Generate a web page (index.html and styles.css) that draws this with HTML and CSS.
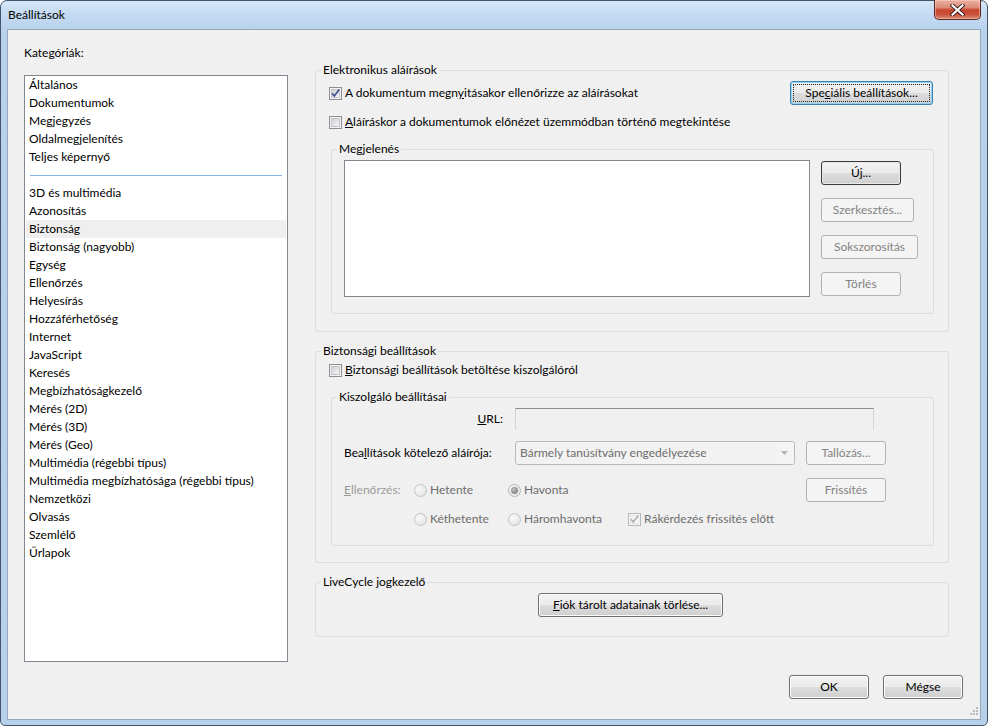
FILE: index.html
```html
<!DOCTYPE html>
<html lang="hu">
<head>
<meta charset="utf-8">
<title>Beállítások</title>
<link rel="stylesheet" href="styles.css">
</head>
<body>
<svg class="defs" width="0" height="0" aria-hidden="true">
  <defs>
    <linearGradient id="cbfill" x1="0" y1="0" x2="1" y2="1">
      <stop offset="0" stop-color="#cbcfd5"/>
      <stop offset="1" stop-color="#f6f6f6"/>
    </linearGradient>
    <linearGradient id="cbfilld" x1="0" y1="0" x2="1" y2="1">
      <stop offset="0" stop-color="#f0f0f0"/>
      <stop offset="1" stop-color="#fafafa"/>
    </linearGradient>
    <radialGradient id="rdfill" cx="0.35" cy="0.35" r="0.7">
      <stop offset="0" stop-color="#fafafa"/>
      <stop offset="1" stop-color="#e4e4e4"/>
    </radialGradient>
    <radialGradient id="rddot" cx="0.4" cy="0.35" r="0.7">
      <stop offset="0" stop-color="#c8c8c8"/>
      <stop offset="1" stop-color="#7a7a7a"/>
    </radialGradient>
    <symbol id="cb" viewBox="0 0 13 13">
      <rect x="0.5" y="0.5" width="12" height="12" fill="#f4f4f4" stroke="#8f8f8f"/>
      <rect x="2.5" y="2.5" width="8" height="8" fill="url(#cbfill)" stroke="#c2c6cc"/>
    </symbol>
    <symbol id="cbchk" viewBox="0 0 13 13">
      <rect x="0.5" y="0.5" width="12" height="12" fill="#f4f4f4" stroke="#8f8f8f"/>
      <rect x="2.5" y="2.5" width="8" height="8" fill="url(#cbfill)" stroke="#c2c6cc"/>
      <path d="M3 6.3 L5.3 9 L10.2 2.6" fill="none" stroke="#3d4f8c" stroke-width="1.7"/>
    </symbol>
    <symbol id="cbchkd" viewBox="0 0 13 13">
      <rect x="0.5" y="0.5" width="12" height="12" fill="#f4f4f4" stroke="#b8b8b8"/>
      <rect x="2.5" y="2.5" width="8" height="8" fill="url(#cbfilld)" stroke="#e2e2e2"/>
      <path d="M3 6.3 L5.3 9 L10.2 2.6" fill="none" stroke="#a8a8a8" stroke-width="1.5"/>
    </symbol>
    <symbol id="rd" viewBox="0 0 13 13">
      <circle cx="6.5" cy="6.5" r="6" fill="url(#rdfill)" stroke="#c4c4c4"/>
    </symbol>
    <symbol id="rdsel" viewBox="0 0 13 13">
      <circle cx="6.5" cy="6.5" r="6" fill="url(#rdfill)" stroke="#b5b5b5"/>
      <circle cx="6.5" cy="6.5" r="3.2" fill="url(#rddot)" stroke="#8c8c8c" stroke-width="0.6"/>
    </symbol>
  </defs>
</svg>

<div class="window">
  <div class="titlebar">
    <span class="title">Beállítások</span>
    <div class="close">
      <svg width="15" height="12" viewBox="0 0 15 12">
        <path d="M2.5 1.5 L12.5 10.5 M12.5 1.5 L2.5 10.5" stroke="#3a1c1c" stroke-width="4" stroke-linecap="square" fill="none"/>
        <path d="M2.5 1.5 L12.5 10.5 M12.5 1.5 L2.5 10.5" stroke="#ffffff" stroke-width="2.2" stroke-linecap="square" fill="none"/>
      </svg>
    </div>
  </div>

  <div class="client">
    <div class="main">
      <div class="left">
        <div class="cat-label">Kategóriák:</div>
        <ul class="catlist">
          <li>Általános</li>
          <li>Dokumentumok</li>
          <li>Megjegyzés</li>
          <li>Oldalmegjelenítés</li>
          <li>Teljes képernyő</li>
          <li class="sep"><span class="sepline"></span></li>
          <li>3D és multimédia</li>
          <li>Azonosítás</li>
          <li class="sel">Biztonság</li>
          <li>Biztonság (nagyobb)</li>
          <li>Egység</li>
          <li>Ellenőrzés</li>
          <li>Helyesírás</li>
          <li>Hozzáférhetőség</li>
          <li>Internet</li>
          <li>JavaScript</li>
          <li>Keresés</li>
          <li>Megbízhatóságkezelő</li>
          <li>Mérés (2D)</li>
          <li>Mérés (3D)</li>
          <li>Mérés (Geo)</li>
          <li>Multimédia (régebbi típus)</li>
          <li>Multimédia megbízhatósága (régebbi típus)</li>
          <li>Nemzetközi</li>
          <li>Olvasás</li>
          <li>Szemlélő</li>
          <li>Űrlapok</li>
        </ul>
      </div>

      <div class="right">
        <fieldset class="group">
          <legend>Elektronikus aláírások</legend>
          <div class="gbody g1">
            <div class="row1">
              <label class="chk"><svg class="box"><use href="#cbchk"/></svg><span>A dokumentum megn<u>y</u>itásakor ellenőrizze az aláírásokat</span></label>
              <button class="btn focus w143">Spe<u>c</u>iális beállítások...</button>
            </div>
            <div class="row2">
              <label class="chk"><svg class="box"><use href="#cb"/></svg><span><u>A</u>láíráskor a dokumentumok előnézet üzemmódban történő megtekintése</span></label>
            </div>
            <fieldset class="group inner">
              <legend>Megjelenés</legend>
              <div class="gbody gm">
                <div class="applist"></div>
                <div class="btncol">
                  <button class="btn def">Új...</button>
                  <button class="btn dis w93">Szerkesztés...</button>
                  <button class="btn dis w97">Sokszorosítás</button>
                  <button class="btn dis">Törlés</button>
                </div>
              </div>
            </fieldset>
          </div>
        </fieldset>

        <fieldset class="group">
          <legend>Biztonsági beállítások</legend>
          <div class="gbody g2">
            <div class="row2 first">
              <label class="chk"><svg class="box"><use href="#cb"/></svg><span><u>B</u>iztonsági beállítások betöltése kiszolgálóról</span></label>
            </div>
            <fieldset class="group inner">
              <legend>Kiszolgáló beállításai</legend>
              <div class="gbody gk">
                <div class="rowA">
                  <span class="lbl ralign"><u>U</u>RL:</span>
                  <div class="textbox"></div>
                </div>
                <div class="rowB">
                  <span class="lbl">Bea<u>l</u>lítások kötelező aláírója:</span>
                  <div class="combo">
                    <span>Bármely tanúsítvány engedélyezése</span>
                    <span class="arrowpart">
                      <svg width="7" height="4" viewBox="0 0 7 4"><path d="M0 0 H7 L3.5 4 Z" fill="#b4b4b4"/></svg>
                    </span>
                  </div>
                  <button class="btn dis">Tallózás...</button>
                </div>
                <div class="grid">
                  <span class="lbl faint"><u>E</u>llenőrzés:</span>
                  <label class="opt c2"><svg class="box"><use href="#rd"/></svg><span>Hetente</span></label>
                  <label class="opt c3"><svg class="box"><use href="#rdsel"/></svg><span>Havonta</span></label>
                  <button class="btn dis c5">Frissítés</button>
                  <label class="opt c2"><svg class="box"><use href="#rd"/></svg><span>Kéthetente</span></label>
                  <label class="opt c3"><svg class="box"><use href="#rd"/></svg><span>Háromhavonta</span></label>
                  <label class="opt c4"><svg class="box"><use href="#cbchkd"/></svg><span>Rákérdezés frissítés előtt</span></label>
                </div>
              </div>
            </fieldset>
          </div>
        </fieldset>

        <fieldset class="group">
          <legend>LiveCycle jogkezelő</legend>
          <div class="gbody g3">
            <button class="btn w185"><u>F</u>iók tárolt adatainak törlése...</button>
          </div>
        </fieldset>
      </div>
    </div>

    <div class="footer">
      <button class="btn">OK</button>
      <button class="btn">Mégse</button>
    </div>

    <svg class="grip" width="11" height="11" viewBox="0 0 11 11">
      <g fill="#b9bdc3">
        <rect x="8" y="0" width="2" height="2"/>
        <rect x="5" y="3" width="2" height="2"/><rect x="8" y="3" width="2" height="2"/>
        <rect x="2" y="6" width="2" height="2"/><rect x="5" y="6" width="2" height="2"/><rect x="8" y="6" width="2" height="2"/>
      </g>
    </svg>
  </div>
</div>
</body>
</html>
```

FILE: styles.css
```css
* { box-sizing: border-box; }

body {
  margin: 0;
  font-family: Lato, "Liberation Sans", sans-serif;
  font-size: 12px;
  line-height: 16px;
  color: #000;
  background: #fff;
}

.defs { position: absolute; width: 0; height: 0; }

.window {
  width: 988px;
  height: 726px;
  border: 1px solid #44556b;
  border-radius: 7px 7px 5px 5px;
  background: linear-gradient(180deg, #d6e7f8 0, #c3daf2 14px, #b9d2ec 28px, #b7d0ea 100%);
  display: flex;
  flex-direction: column;
  position: relative;
}

.titlebar {
  height: 28px;
  flex: none;
  display: flex;
  align-items: flex-start;
}

.title {
  padding-left: 7px;
  margin-top: 6px;
  line-height: 16px;
  color: #000;
}

.close {
  margin-left: auto;
  margin-right: 6px;
  margin-top: -1px;
  width: 47px;
  height: 20px;
  border: 1px solid #5b2622;
  border-top: none;
  border-radius: 0 0 5px 5px;
  background: linear-gradient(180deg, #ebb1a4 0, #dc8a76 40%, #c7462d 52%, #c9503a 75%, #dc8c72 100%);
  box-shadow: inset 0 0 0 1px rgba(255, 220, 210, 0.45);
  display: flex;
  align-items: center;
  justify-content: center;
}

.client {
  flex: 1;
  margin: 0 6px 5px;
  border: 1px solid #98a8bb;
  background: #f0f0f0;
  display: flex;
  flex-direction: column;
  position: relative;
}

.main {
  display: flex;
  padding: 15px 0 0 16px;
}

.left { width: 264px; flex: none; }

.cat-label { height: 16px; }

.catlist {
  list-style: none;
  margin: 14px 0 0;
  padding: 0 1px;
  height: 587px;
  border: 1px solid #828790;
  background: #fff;
}

.catlist li {
  height: 18px;
  line-height: 18px;
  padding-left: 3px;
  white-space: nowrap;
}

.catlist li.sel { background: #efefef; }

.catlist li.sep {
  display: flex;
  align-items: center;
  padding: 0 4px;
}

.sepline {
  display: block;
  width: 100%;
  height: 1px;
  background: #86b3e3;
}

.right {
  margin-left: 27px;
  width: 634px;
  flex: none;
  padding-top: 17px;
  display: flex;
  flex-direction: column;
  gap: 11px;
}

fieldset.group {
  margin: 0;
  padding: 0;
  min-width: 0;
  border: 1px solid #d5dfe5;
  border-radius: 3px;
}

fieldset.group > legend {
  margin-left: 5px;
  padding: 0 2px;
  line-height: 16px;
}

.g1 { padding: 3px 15px 17px 13px; }

.row1 {
  height: 24px;
  display: flex;
  align-items: center;
  justify-content: space-between;
}

.row2 {
  height: 16px;
  margin-top: 9px;
  display: flex;
  align-items: center;
}

.row2.first { margin-top: 0; }

.chk, .opt {
  display: flex;
  align-items: center;
  gap: 3px;
  white-space: nowrap;
}

.box { width: 13px; height: 13px; flex: none; }

fieldset.inner {
  margin-top: 11px;
  margin-left: 2px;
  width: 603px;
}

.gm {
  padding: 3px 0 16px 12px;
  display: flex;
  align-items: flex-start;
}

.applist {
  width: 466px;
  height: 137px;
  background: #fff;
  border: 1px solid #828790;
}

.btncol {
  margin-left: 11px;
  padding-top: 1px;
  display: flex;
  flex-direction: column;
  gap: 13px;
}

.btn {
  height: 24px;
  width: 80px;
  padding: 0;
  border: 1px solid #707070;
  border-radius: 3px;
  background: linear-gradient(180deg, #f2f2f2 0, #ebebeb 49%, #dddddd 51%, #cfcfcf 100%);
  box-shadow: inset 0 0 0 1px #fcfcfc;
  font: inherit;
  line-height: 20px;
  color: #000;
  text-align: center;
  white-space: nowrap;
  position: relative;
  flex: none;
}

.btn.def {
  border-color: #3a3a3a;
  box-shadow: inset 0 0 0 1px #e8e8e8;
}

.btn.dis {
  border-color: #adb2b5;
  background: #f4f4f4;
  box-shadow: none;
  color: #838383;
}

.btn.focus {
  border-color: #3c7fb1;
  box-shadow: inset 0 0 0 1px #8fd3f3;
}

.btn.focus::after {
  content: "";
  position: absolute;
  inset: 2px;
  border: 1px dotted #222;
  border-radius: 1px;
}

.w93 { width: 93px; }
.w97 { width: 97px; }
.w143 { width: 143px; }
.w185 { width: 185px; }

.g2 { padding: 3px 15px 16px 13px; }

.gk { padding: 3px 46px 18px 12px; }

.rowA {
  height: 22px;
  display: flex;
  align-items: center;
}

.lbl { width: 159px; margin-right: 12px; white-space: nowrap; flex: none; }
.lbl.ralign { text-align: right; }
.lbl.faint { color: #9c9c9c; margin-right: 0; width: auto; }

.textbox {
  width: 359px;
  height: 22px;
  border: 1px solid;
  border-color: #8d8d8d #d3d3d3 #ececec #d3d3d3;
  background: #f0f0f0;
}

.rowB {
  margin-top: 11px;
  height: 24px;
  display: flex;
  align-items: center;
}

.combo {
  width: 280px;
  height: 24px;
  border: 1px solid #b9b9b9;
  border-radius: 3px;
  background: #f2f2f2;
  color: #6d6d6d;
  display: flex;
  align-items: center;
  padding-left: 4px;
  margin-right: 11px;
  flex: none;
}

.arrowpart {
  margin-left: auto;
  width: 19px;
  height: 22px;
  display: flex;
  align-items: center;
  justify-content: center;
  background: #f4f4f4;
  border-radius: 0 2px 2px 0;
}

.grid {
  margin-top: 13px;
  display: grid;
  grid-template-columns: 70px 94px 120px 178px 80px;
  grid-template-rows: 24px 16px;
  row-gap: 9px;
  align-items: center;
}

.grid .opt { color: #6d6d6d; }
.c2 { grid-column: 2; }
.c3 { grid-column: 3; }
.c4 { grid-column: 4; }
.c5 { grid-column: 5; }

.g3 {
  padding: 3px 0 19px;
  display: flex;
  justify-content: center;
}

.g3 .btn { margin-left: -3px; }

.footer {
  margin-top: auto;
  display: flex;
  justify-content: flex-end;
  gap: 14px;
  padding: 0 17px 20px 0;
}

.grip {
  position: absolute;
  right: 1px;
  bottom: 1px;
}
```
